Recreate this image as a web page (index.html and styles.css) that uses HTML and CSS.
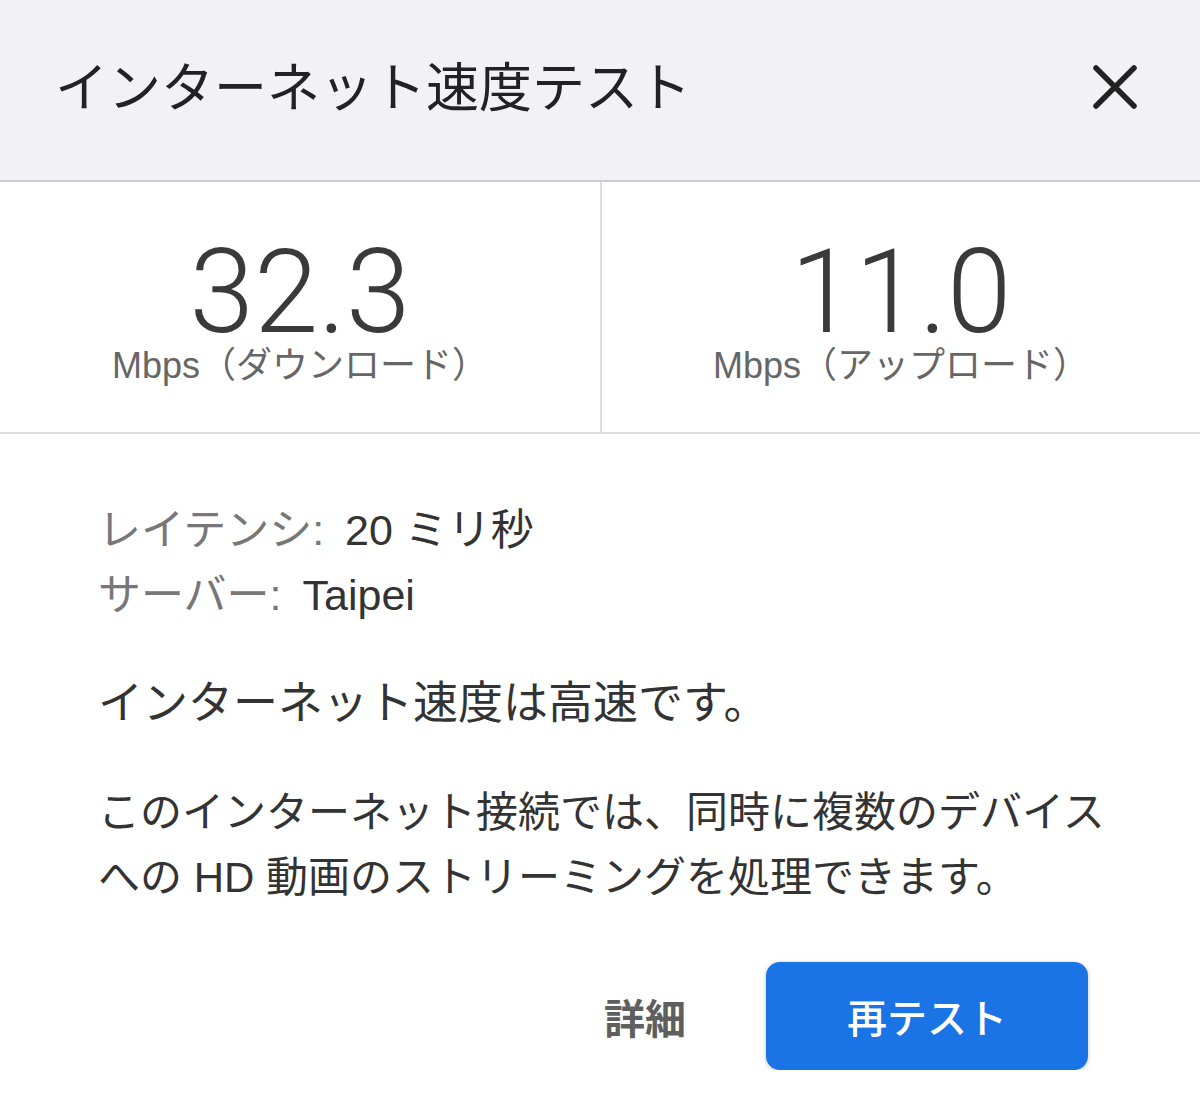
FILE: index.html
```html
<!DOCTYPE html>
<html lang="ja">
<head>
<meta charset="utf-8">
<title>インターネット速度テスト</title>
<link rel="stylesheet" href="styles.css">
</head>
<body>
<div class="dialog">
  <header class="header">
    <h1 class="title">インターネット速度テスト</h1>
    <button class="close" aria-label="閉じる">
      <svg width="46" height="46" viewBox="0 0 46 46"><path d="M4 4 L42 42 M42 4 L4 42" stroke="#222" stroke-width="5.5" stroke-linecap="round" fill="none"/></svg>
    </button>
  </header>
  <section class="stats">
    <div class="stat">
      <div class="num">32.3</div>
      <div class="unit">Mbps（ダウンロード）</div>
    </div>
    <div class="stat">
      <div class="num">11.0</div>
      <div class="unit">Mbps（アップロード）</div>
    </div>
  </section>
  <section class="content">
    <div class="info">
      <div class="row"><span class="lbl">レイテンシ:</span><span class="val">20 ミリ秒</span></div>
      <div class="row"><span class="lbl">サーバー:</span><span class="val">Taipei</span></div>
    </div>
    <p class="verdict">インターネット速度は高速です。</p>
    <p class="desc">このインターネット接続では、同時に複数のデバイスへの HD 動画のストリーミングを処理できます。</p>
    <div class="actions">
      <button class="details">詳細</button>
      <button class="retest">再テスト</button>
    </div>
  </section>
</div>
</body>
</html>
```
FILE: styles.css
```css
html, body {
  margin: 0;
  padding: 0;
  background: #ffffff;
}
body {
  font-family: "Liberation Sans", "Noto Sans CJK JP", sans-serif;
  color: #333;
}
.dialog {
  width: 1200px;
}
.header {
  box-sizing: border-box;
  height: 182px;
  background: #f2f2f4;
  border-bottom: 2px solid #cdcdcf;
  display: flex;
  align-items: center;
  justify-content: space-between;
  padding: 0 62px 0 55px;
}
.title {
  margin: 0;
  font-weight: 400;
  font-size: 53px;
  color: #222;
  line-height: 1;
  padding-bottom: 4px;
}
.close {
  background: none;
  border: 0;
  padding: 0;
  width: 46px;
  height: 46px;
  display: flex;
  margin-bottom: 6px;
}
.stats {
  display: grid;
  grid-template-columns: 1fr 1fr;
  border-bottom: 2px solid #dcdcdc;
}
.stat {
  display: flex;
  flex-direction: column;
  align-items: center;
  height: 250px;
  padding-top: 67px;
  box-sizing: border-box;
}
.stat + .stat {
  border-left: 2px solid #dcdcdc;
}
.num {
  font-family: Roboto, "Liberation Sans", sans-serif;
  font-weight: 300;
  font-size: 116px;
  line-height: 86px;
  color: #3a3a3a;
}
.unit {
  font-size: 36px;
  line-height: 40px;
  color: #666;
  margin-top: 11px;
}
.content {
  padding: 64px 70px 0 98px;
}
.info .row {
  font-size: 43px;
  line-height: 65px;
}
.lbl {
  color: #777;
}
.val {
  color: #333;
  margin-left: 21px;
}
.verdict {
  margin: 43px 0 0;
  font-size: 45px;
  line-height: 65px;
  color: #333;
}
.desc {
  margin: 44px 0 0;
  font-size: 42px;
  line-height: 65px;
  color: #333;
}
.actions {
  display: flex;
  justify-content: flex-end;
  align-items: center;
  gap: 80px;
  margin-top: 52px;
  padding-right: 42px;
}
.details {
  background: none;
  border: 0;
  padding: 0;
  font-family: "Noto Sans CJK JP", sans-serif;
  font-size: 41px;
  font-weight: 700;
  color: #5f5f5f;
}
.retest {
  width: 322px;
  height: 108px;
  border: 0;
  border-radius: 14px;
  background: #1b74e6;
  color: #fff;
  font-family: "Noto Sans CJK JP", sans-serif;
  font-size: 40px;
  font-weight: 500;
  box-shadow: 0 1px 4px rgba(0,0,0,0.25);
}
```
